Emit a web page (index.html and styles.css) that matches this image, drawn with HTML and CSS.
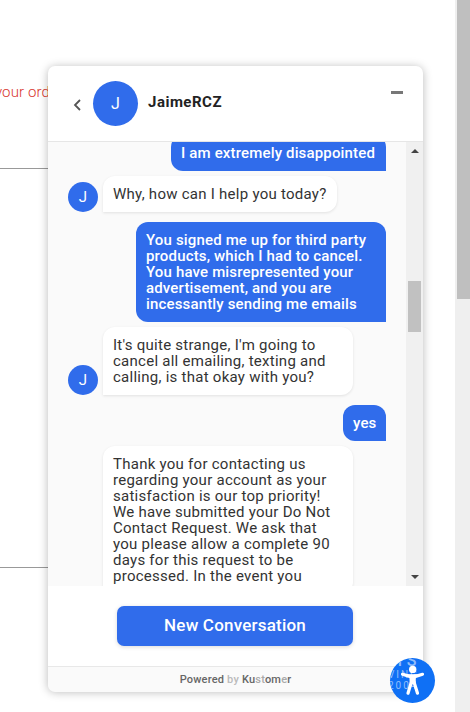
FILE: index.html
```html
<!DOCTYPE html>
<html lang="en">
<head>
  <meta charset="utf-8" />
  <meta name="viewport" content="width=device-width, initial-scale=1.0" />
  <title>Chat</title>
  <link rel="stylesheet" href="styles.css">
</head>

<body>
  <div class="page">
    <p class="notice">your order</p>
    <div class="rule"></div>
    <div class="rule rule-second"></div>
  </div>

  <div class="page-scroll"><div class="page-thumb"></div></div>

  <div class="chat">
    <div class="chat-header">
      <svg class="back" viewBox="0 0 8 12"><path d="M7 1 L2 6 L7 11" /></svg>
      <div class="avatar avatar-large">J</div>
      <h1 class="agent">JaimeRCZ</h1>
      <div class="minimize"></div>
    </div>

    <div class="chat-body">
      <div class="messages">
        <div class="row sent"><div class="bubble first">I am extremely disappointed</div></div>
        <div class="row received">
          <div class="avatar">J</div>
          <div class="bubble question">Why, how can I help you today?</div>
        </div>
        <div class="row sent">
          <div class="bubble wide">You signed me up for third party<br>products, which I had to cancel.<br>You have misrepresented your<br>advertisement, and you are<br>incessantly sending me emails</div>
        </div>
        <div class="row received">
          <div class="avatar">J</div>
          <div class="bubble wide">It's quite strange, I'm going to<br>cancel all emailing, texting and<br>calling, is that okay with you?</div>
        </div>
        <div class="row sent"><div class="bubble yes">yes</div></div>
        <div class="row received indent">
          <div class="bubble wide">Thank you for contacting us<br>regarding your account as your<br>satisfaction is our top priority!<br>We have submitted your Do Not<br>Contact Request. We ask that<br>you please allow a complete 90<br>days for this request to be<br>processed. In the event you</div>
        </div>
      </div>
      <div class="scrollbar">
        <svg class="arrow" viewBox="0 0 8 4"><path d="M0 4 L4 0 L8 4 Z" /></svg>
        <div class="thumb"></div>
        <svg class="arrow arrow-down" viewBox="0 0 8 4"><path d="M0 0 L4 4 L8 0 Z" /></svg>
      </div>
    </div>

    <div class="chat-footer">
      <button class="new-conversation">New Conversation</button>
    </div>
    <div class="powered">Powered <span class="faded">by</span> Ku<span class="faded-light">st</span>om<span class="faded-light">e</span>r</div>
  </div>

  <div class="accessibility">
    <div class="mark">
      <span class="mark-top">TS</span>
      <span>VING</span>
      <span>2004</span>
    </div>
    <svg class="person" viewBox="0 0 45 45">
      <circle cx="22.7" cy="11.4" r="3.7" />
      <path d="M12.5 16.3 L19.5 18.3 H25.8 L32.5 16.3" />
      <path class="torso" d="M19.3 17 H26 L25.6 26 H19.8 Z" />
      <path d="M21.4 24 L18 35.2 M24 24 L27.5 35.2" />
    </svg>
  </div>
</body>
</html>
```

FILE: styles.css
```css
body {
  margin: 0;
  height: 712px;
  overflow: hidden;
  background: #fff;
  font-family: Roboto, "Liberation Sans", sans-serif;
}

h1, p {
  margin: 0;
  font-weight: normal;
}

.page {
  width: 60px;
  padding-top: 82px;
}

.notice {
  margin-left: -5px;
  height: 20px;
  line-height: 20px;
  font-size: 15px;
  font-weight: 300;
  letter-spacing: 0.1px;
  white-space: nowrap;
  color: #d9362f;
}

.rule {
  height: 1px;
  margin-top: 66px;
  background: #999;
}

.rule-second {
  margin-top: 398px;
}

.page-scroll {
  position: absolute;
  top: 0;
  right: 0;
  width: 15px;
  height: 712px;
  background: #efefef;
}

.page-thumb {
  width: 13px;
  height: 299px;
  margin-left: 2px;
  background: #bfbfbf;
}

/* chat window */
.chat {
  position: absolute;
  left: 48px;
  top: 66px;
  width: 375px;
  height: 625px;
  display: flex;
  flex-direction: column;
  border-radius: 7px;
  background: #fff;
  box-shadow: 0 1px 10px rgba(0, 0, 0, 0.28);
}

.chat-header {
  display: flex;
  flex: none;
  align-items: center;
  height: 76px;
  padding: 0 20px 0 25px;
  border-bottom: 1px solid #e6e6e6;
  box-sizing: border-box;
}

.back {
  width: 8px;
  height: 12px;
  margin-right: 12px;
  margin-top: 3px;
  fill: none;
  stroke: #555;
  stroke-width: 1.8;
}

.avatar {
  flex: none;
  width: 30px;
  height: 30px;
  line-height: 30px;
  border-radius: 50%;
  background: #306ceb;
  color: #fff;
  font-size: 15px;
  text-align: center;
}

.avatar-large {
  width: 45px;
  height: 45px;
  line-height: 45px;
  font-size: 16px;
}

.agent {
  margin: -4px auto 0 10px;
  font-size: 15px;
  font-weight: 700;
  letter-spacing: 0.5px;
  color: #222;
}

.minimize {
  width: 12px;
  height: 3px;
  margin-top: -22px;
  background: #777;
}

.chat-body {
  display: flex;
  flex: none;
  height: 444px;
  overflow: hidden;
  background: #fafafa;
}

.messages {
  width: 338px;
  margin-top: -7px;
}

.row {
  display: flex;
  align-items: flex-end;
}

.sent {
  justify-content: flex-end;
  margin-bottom: 5px;
}

.received {
  padding-left: 20px;
  gap: 5px;
  margin-bottom: 10px;
}

.indent {
  padding-left: 55px;
}

.bubble {
  padding: 10px;
  box-sizing: border-box;
  font-size: 15px;
  line-height: 16px;
  white-space: nowrap;
  letter-spacing: 0.26px;
  border-radius: 12px;
}

.sent .bubble {
  background: #306ceb;
  color: #fff;
  font-weight: 500;
  letter-spacing: 0.16px;
  border-bottom-right-radius: 0;
}

.received .bubble {
  background: #fff;
  color: #333;
  border-bottom-left-radius: 0;
  box-shadow: 0 1px 3px rgba(0, 0, 0, 0.1);
}

.bubble.wide {
  width: 250px;
}

.bubble.first {
  width: 215px;
}

.bubble.question {
  width: 234px;
}

.bubble.yes {
  width: 43px;
}

.scrollbar {
  display: flex;
  flex-direction: column;
  align-items: center;
  width: 17px;
  margin-left: auto;
  background: #f0f0f0;
}

.arrow {
  width: 8px;
  height: 4px;
  margin-top: 7px;
  fill: #444;
}

.thumb {
  width: 13px;
  height: 51px;
  margin-top: 128px;
  background: #c1c1c1;
}

.arrow-down {
  margin-top: auto;
  margin-bottom: 7px;
}

.chat-footer {
  flex: none;
  height: 80px;
  padding: 20px 0 0 69px;
  box-sizing: border-box;
  background: #fff;
}

.new-conversation {
  display: block;
  width: 236px;
  height: 40px;
  padding: 0 0 2px;
  border: 0;
  border-radius: 7px;
  background: #306ceb;
  color: #fff;
  font-family: inherit;
  font-size: 17px;
  font-weight: 500;
  letter-spacing: 0.2px;
  box-shadow: 0 1px 4px rgba(0, 0, 0, 0.15);
}

.powered {
  flex: 1;
  line-height: 25px;
  border-top: 1px solid #e8e8e8;
  border-radius: 0 0 7px 7px;
  background: #fafafa;
  color: #666;
  font-size: 11px;
  font-weight: 500;
  letter-spacing: 0.2px;
  text-align: center;
}

.faded {
  color: #bbb;
}

.faded-light {
  color: #aaa;
}

.accessibility {
  position: absolute;
  left: 390px;
  top: 658px;
  width: 45px;
  height: 45px;
  border-radius: 50%;
  overflow: hidden;
  background: #0f70f5;
}

.mark {
  display: flex;
  flex-direction: column;
  margin-left: -2px;
  color: #8fbdfa;
  font-size: 10px;
  line-height: 11px;
  letter-spacing: 2px;
}

.mark-top {
  height: 11px;
  margin-left: 7px;
  font-size: 16px;
  font-weight: 500;
  line-height: 6px;
}

.person {
  position: absolute;
  left: 0;
  top: 0;
  width: 45px;
  height: 45px;
  fill: #fff;
  stroke: #fff;
  stroke-width: 3.2;
  stroke-linecap: round;
}

.person circle,
.torso {
  stroke: none;
}
```
